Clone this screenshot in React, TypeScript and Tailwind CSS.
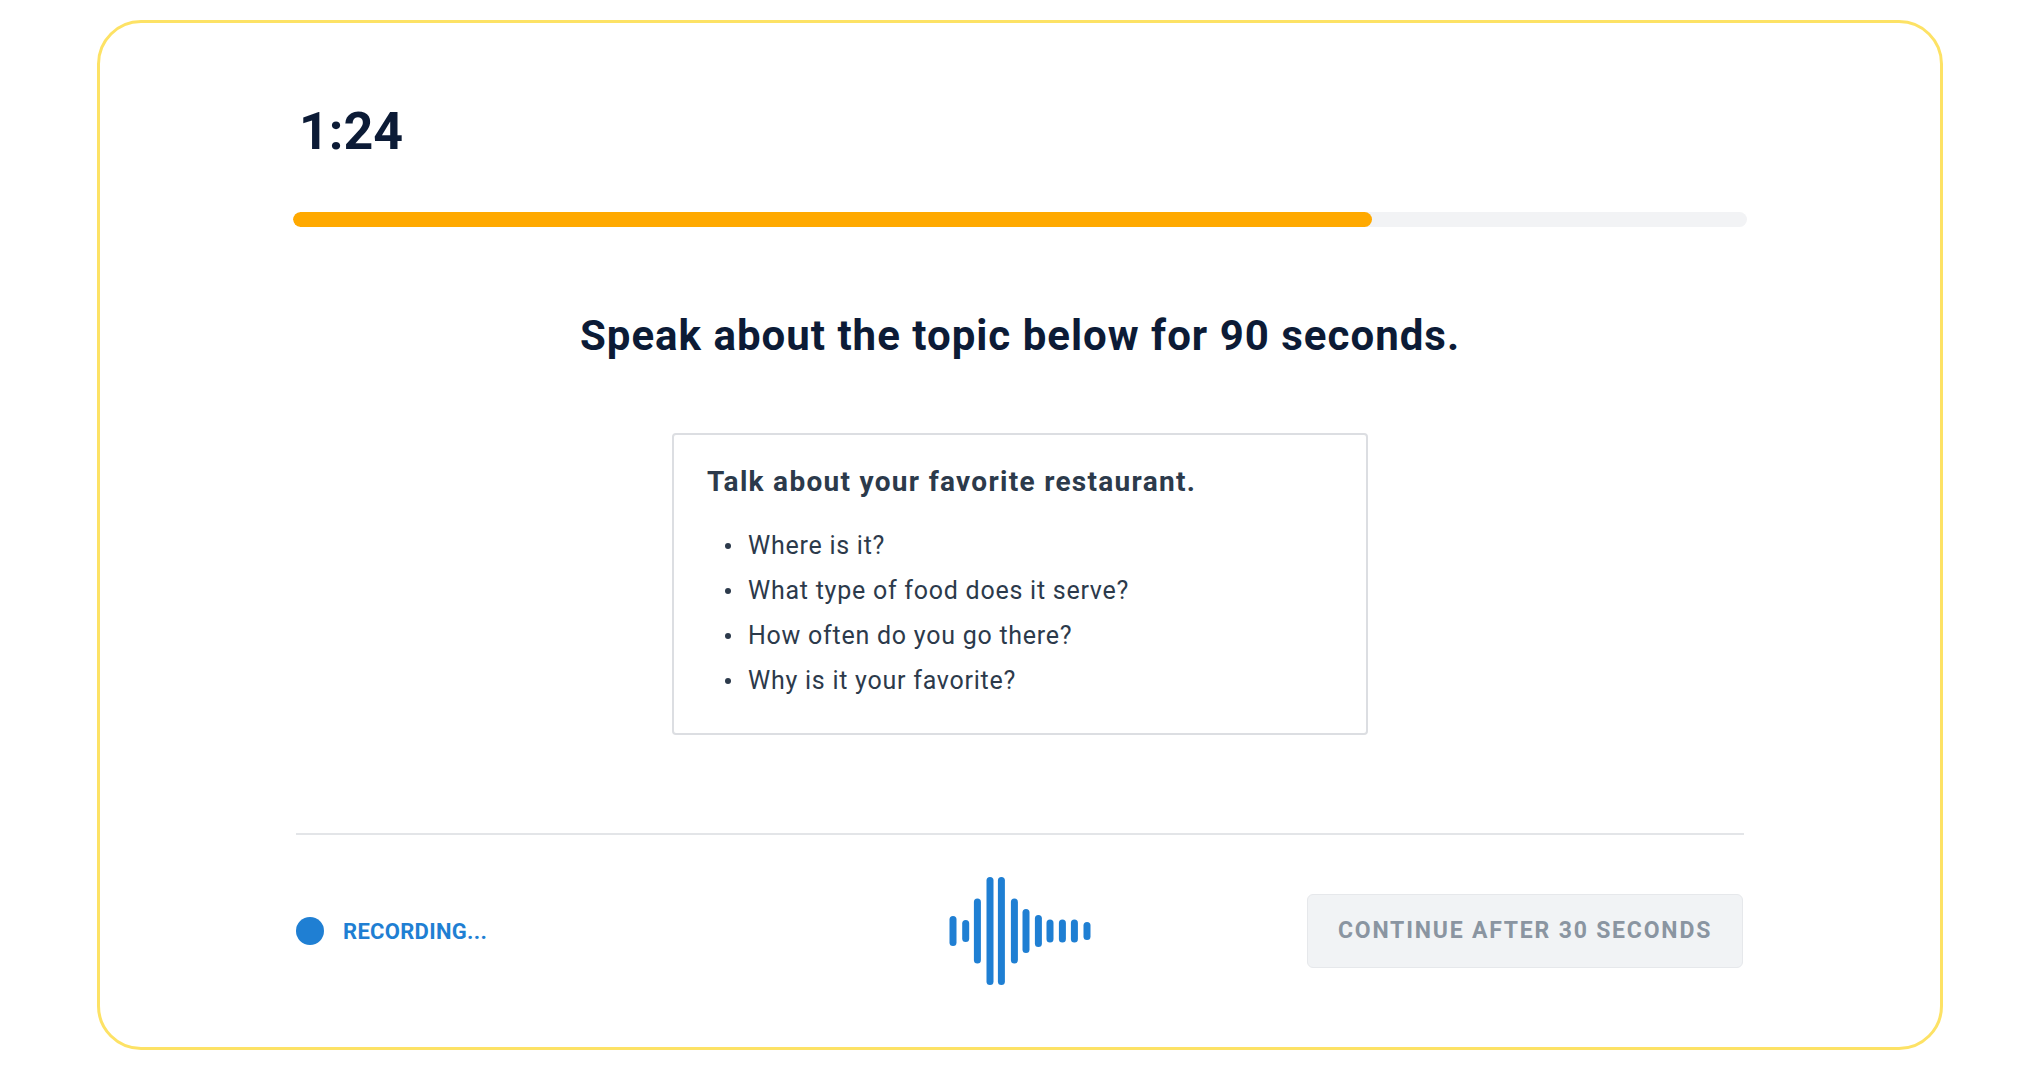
import React from "react";

const bars = [
  { x: 0, h: 30 },
  { x: 12.7, h: 22 },
  { x: 24.4, h: 65 },
  { x: 37, h: 108 },
  { x: 48.4, h: 108 },
  { x: 61.4, h: 65 },
  { x: 73, h: 44 },
  { x: 85.4, h: 32 },
  { x: 97, h: 23 },
  { x: 109.4, h: 23 },
  { x: 121.4, h: 23 },
  { x: 134, h: 18 },
];

const prompts = [
  "Where is it?",
  "What type of food does it serve?",
  "How often do you go there?",
  "Why is it your favorite?",
];

const Waveform = () => (
  <svg width="142" height="112" viewBox="0 0 142 112" className="block">
    {bars.map((b, i) => (
      <rect
        key={i}
        x={b.x + 0.5}
        y={56 - b.h / 2}
        width="7"
        height={b.h}
        rx="3.5"
        fill="#1f7fd3"
      />
    ))}
  </svg>
);

export default function App() {
  const progress = 74.2;

  return (
    <div
      className="min-h-screen bg-white px-[97px] py-[20px]"
      style={{ fontFamily: "Roboto, 'Liberation Sans', sans-serif" }}
    >
      <div className="h-[1030px] rounded-[44px] border-[3px] border-[#fde265] px-[193px] flex flex-col">
        {/* timer */}
        <div className="mt-[83px] text-[52px] leading-none font-bold text-[#0c1b36] pl-[6px]">
          1:24
        </div>

        {/* progress */}
        <div className="mt-[54px] h-[15px] w-full rounded-full bg-[#f2f3f5] overflow-hidden">
          <div
            className="h-full rounded-full bg-[#ffa900]"
            style={{ width: `${progress}%` }}
          />
        </div>

        <h1 className="mt-[88px] text-center text-[42px] leading-none font-bold tracking-[1px] text-[#0c1b36]">
          Speak about the topic below for 90 seconds.
        </h1>

        {/* prompt card */}
        <div className="mt-[76px] mx-auto w-[696px] h-[302px] rounded-[4px] border-2 border-[#dcdee2] p-[33px]">
          <h2 className="text-[28px] leading-none font-bold tracking-[1.3px] text-[#2c3a4b]">
            Talk about your favorite restaurant.
          </h2>
          <ul className="mt-[27px]">
            {prompts.map((p) => (
              <li
                key={p}
                className="flex items-center h-[45px] text-[25px] tracking-[0.75px] text-[#2c3a4b]"
              >
                <span className="ml-[18px] mr-[17px] w-[6px] h-[6px] rounded-full bg-[#2c3a4b]" />
                {p}
              </li>
            ))}
          </ul>
        </div>

        <div className="mt-[98px] h-[2px] bg-[#e3e5e8] mx-[3px]" />

        {/* footer */}
        <div className="mt-[59px] grid grid-cols-[1fr_auto_1fr] grid-rows-[74px] items-center">
          <div className="flex items-center gap-[19px] pl-[3px]">
            <span className="w-[28px] h-[28px] rounded-full bg-[#1f7fd3]" />
            <span className="text-[22px] font-bold tracking-[0.3px] text-[#1f7fd3]">
              RECORDING...
            </span>
          </div>
          <div className="h-[74px] flex items-center justify-center">
            <Waveform />
          </div>
          <button className="justify-self-end mr-[4px] w-[436px] h-[74px] rounded-[6px] border border-[#e6e8eb] bg-[#f1f3f5] text-[23px] font-bold tracking-[1.8px] text-[#8a95a1]">
            CONTINUE AFTER 30 SECONDS
          </button>
        </div>
      </div>
    </div>
  );
}
